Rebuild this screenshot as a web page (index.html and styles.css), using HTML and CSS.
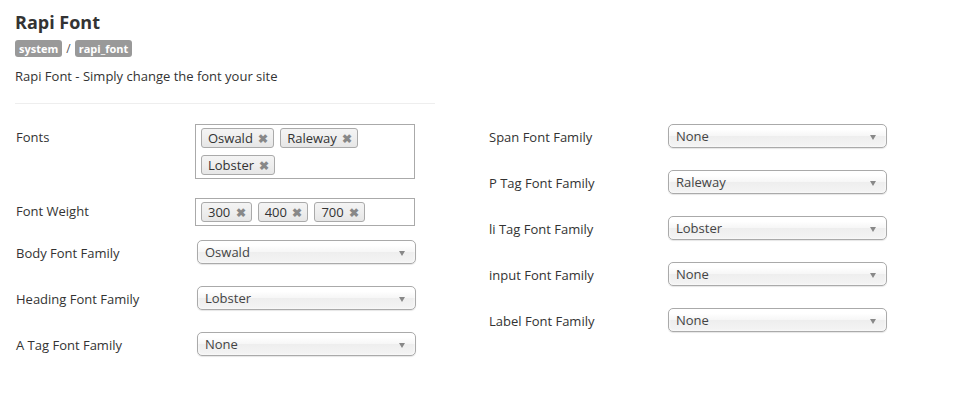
FILE: index.html
```html
<!DOCTYPE html>
<html lang="en">
<head>
  <meta charset="UTF-8" />
  <title>Rapi Font</title>
  <link rel="stylesheet" href="styles.css">
</head>
<body>
  <div class="page">
    <div class="header">
      <h1>Rapi Font</h1>
      <div class="crumbs">
        <span class="badge">system</span>
        <span class="sep">/</span>
        <span class="badge">rapi_font</span>
      </div>
      <p class="desc">Rapi Font - Simply change the font your site</p>
    </div>

    <div class="columns">
      <div class="col col-left">
        <div class="row row-fonts">
          <label>Fonts</label>
          <div class="multi tall">
            <span class="tag">Oswald <b>&#10006;</b></span>
            <span class="tag">Raleway <b>&#10006;</b></span>
            <span class="tag">Lobster <b>&#10006;</b></span>
          </div>
        </div>
        <div class="row row-weight">
          <label>Font Weight</label>
          <div class="multi">
            <span class="tag">300 <b>&#10006;</b></span>
            <span class="tag">400 <b>&#10006;</b></span>
            <span class="tag">700 <b>&#10006;</b></span>
          </div>
        </div>
        <div class="row">
          <label>Body Font Family</label>
          <div class="select">Oswald<i class="arrow"></i></div>
        </div>
        <div class="row">
          <label>Heading Font Family</label>
          <div class="select">Lobster<i class="arrow"></i></div>
        </div>
        <div class="row">
          <label>A Tag Font Family</label>
          <div class="select">None<i class="arrow"></i></div>
        </div>
      </div>

      <div class="col col-right">
        <div class="row">
          <label>Span Font Family</label>
          <div class="select">None<i class="arrow"></i></div>
        </div>
        <div class="row">
          <label>P Tag Font Family</label>
          <div class="select">Raleway<i class="arrow"></i></div>
        </div>
        <div class="row">
          <label>li Tag Font Family</label>
          <div class="select">Lobster<i class="arrow"></i></div>
        </div>
        <div class="row">
          <label>input Font Family</label>
          <div class="select">None<i class="arrow"></i></div>
        </div>
        <div class="row">
          <label>Label Font Family</label>
          <div class="select">None<i class="arrow"></i></div>
        </div>
      </div>
    </div>
  </div>
</body>
</html>
```

FILE: styles.css
```css
* {
  box-sizing: border-box;
}

body {
  margin: 0;
  background: #fff;
  color: #333;
  font-family: 'Open Sans', 'Lato', sans-serif;
  font-size: 13px;
}

.page {
  padding: 10px 15px;
}

.header {
  width: 420px;
  border-bottom: 1px solid #eee;
  padding-bottom: 18px;
}

h1 {
  margin: 0;
  font-size: 18px;
  font-weight: 700;
  line-height: 24px;
  color: #333;
}

.crumbs {
  margin-top: 6px;
  display: flex;
  align-items: center;
  gap: 4px;
}

.badge {
  background: #999;
  color: #fff;
  font-size: 11px;
  font-weight: 700;
  line-height: 17px;
  padding: 0 4px;
  border-radius: 3px;
}

.sep {
  font-size: 12px;
  color: #555;
}

.desc {
  margin: 10px 0 0;
  line-height: 18px;
}

.columns {
  display: flex;
  margin-top: 20px;
}

.col-left {
  width: 420px;
}

.col-right {
  margin-left: 53px;
}

.row {
  display: flex;
  align-items: flex-start;
  margin-bottom: 22px;
}

.row label {
  width: 180px;
  padding-top: 5px;
  line-height: 16px;
  padding-left: 1px;
}

.row-fonts {
  margin-bottom: 19px;
}

.row-weight {
  margin-bottom: 14px;
}

.multi {
  width: 220px;
  border: 1px solid #aaa;
  padding: 0 0 3px 5px;
  display: flex;
  flex-wrap: wrap;
  row-gap: 4px;
  background: #fff;
}

.multi.tall {
  height: 55px;
}

.tag {
  margin: 3px 6px 0 0;
  height: 20px;
  line-height: 18px;
  padding: 0 5px 0 6px;
  border: 1px solid #aaa;
  border-radius: 3px;
  background: linear-gradient(#f4f4f4, #eee 50%, #e6e6e6);
  color: #333;
}

.tag b {
  color: #888;
  font-size: 12px;
  margin-left: 2px;
}

.select {
  position: relative;
  width: 219px;
  height: 24px;
  line-height: 22px;
  margin-left: 2px;
  padding-left: 7px;
  border: 1px solid #aaa;
  border-radius: 5px;
  background: linear-gradient(#fff 20%, #f6f6f6 50%, #eee 52%, #f4f4f4);
  box-shadow: 0 0 3px #fff inset, 0 1px 1px rgba(0, 0, 0, 0.1);
  color: #444;
}

.col-right .select {
  margin-left: 0;
}

.arrow {
  position: absolute;
  right: 10px;
  top: 10px;
  border-left: 3px solid transparent;
  border-right: 3px solid transparent;
  border-top: 5px solid #888;
}
```
